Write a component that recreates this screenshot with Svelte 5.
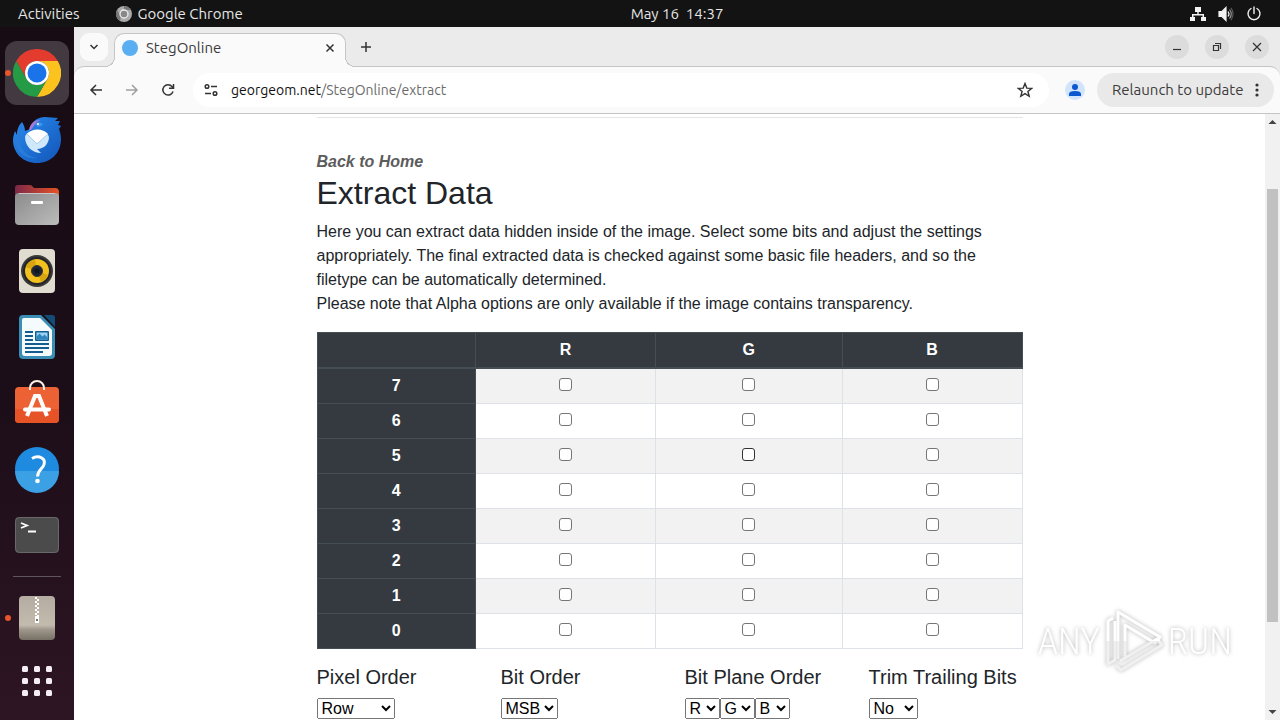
<script>
  const bits = [7, 6, 5, 4, 3, 2, 1, 0];
  const channels = ['R', 'G', 'B'];

  let selected = $state([]);
  let path = $state('/StegOnline/extract');
  let pixelOrder = $state('Row');
  let bitOrder = $state('MSB');
  let planes = $state(['R', 'G', 'B']);
  let trim = $state('No');
</script>

<div class="desktop">
  <header class="topbar">
    <div class="menus">
      <button>Activities</button>
      <button class="app">
        <svg width="16" height="16" viewBox="0 0 16 16">
          <circle cx="8" cy="8" r="8" fill="#aaa" />
          <path d="M8 0a8 8 0 0 1 7 4H8zM1 4l4 6-1 5a8 8 0 0 1-3-11z" fill="#777" />
          <circle cx="8" cy="8" r="4" fill="#888" stroke="#eee" stroke-width="1.3" />
        </svg>
        Google Chrome
      </button>
    </div>
    <button class="clock">May 16&nbsp; 14:37</button>
    <div class="status">
      <svg width="16" height="16" viewBox="0 0 16 16" fill="#f2f2f2">
        <path d="M5 1h6v5H8.700v2H14v3h2v4h-5v-4h1.500V9.400h-9V11H5v4H0v-4h2V8h5.300V6H5z" />
      </svg>
      <svg width="16" height="16" viewBox="0 0 16 16" fill="none" stroke="#f2f2f2" stroke-width="1.200">
        <path d="M1 5.500h3l4-4v13l-4-4H1z" fill="#f2f2f2" />
        <path d="M10 5.500q2 2.500 0 5" />
        <path d="M11.500 3.500q3.500 4.500 0 9" stroke="#999" />
        <path d="M13 1.800q4 6 0 12.400" stroke="#555" />
      </svg>
      <svg width="16" height="16" viewBox="0 0 16 16" fill="none" stroke="#f2f2f2" stroke-width="1.400">
        <path d="M5 2.500a6 6 0 1 0 6 0M8 1v6.500" stroke-linecap="round" />
      </svg>
    </div>
  </header>

  <nav class="dock">
    <button class="active running" aria-label="Google Chrome">
      <svg viewBox="0 0 48 48">
        <path d="M3.200 12A24 24 0 0 1 44.800 12H24A12 12 0 0 0 13.600 30z" fill="#e33b2e" />
        <path d="M44.800 12A24 24 0 0 1 24 48L34.400 30A12 12 0 0 0 24 12z" fill="#fcc31e" />
        <path d="M24 48A24 24 0 0 1 3.200 12L13.600 30A12 12 0 0 0 34.400 30z" fill="#259b46" />
        <circle cx="24" cy="24" r="12" fill="#fff" />
        <circle cx="24" cy="24" r="9.500" fill="#1a73e8" />
      </svg>
    </button>
    <button aria-label="Thunderbird">
      <svg viewBox="0 0 48 48">
        <defs>
          <linearGradient id="bird" x1="0" y1="0" x2="1" y2="1">
            <stop offset="0" stop-color="#2a8df0" />
            <stop offset="1" stop-color="#1254b8" />
          </linearGradient>
        </defs>
        <path d="M9 7c2 3 3 6 3 9l5-2C18 7 24 2 32 2c5 0 8 1 13 1l-3 3 5 0-2 4 3 1-2 3c1 3 2 6 2 10 0 14-10 24-24 24C10 48 0 38 0 25c0-3 1-6 2-9l2 4c0-6 2-10 5-13z" fill="url(#bird)" />
        <path d="M9 8c0 8-4 12-2 21 3 9 9 13 18 14C13 45 3 37 2 26l2-5c0-5 2-9 5-13z" fill="#2a7cda" />
        <path d="M16 15c1-6 5-10 11-10-5 3-6 6-9 10z" fill="#a679d8" />
        <path d="M12 22c2-9 22-9 24 0 0 7-5 12-12 12l4 4c-9 0-16-7-16-16z" fill="#cfe8fc" />
        <path d="M14 19c5-6 16-6 21 0l-10 9q-1 1-2 0z" fill="#fff" />
        <path d="m14 19 9 9q1 1 2 0l10-9" fill="none" stroke="#a8cbe7" />
        <path d="M22 9q4-3 8 0-2 3-5 3z" fill="#3f96ee" />
        <circle cx="25" cy="9" r="1" fill="#fff" />
      </svg>
    </button>
    <button aria-label="Files">
      <svg viewBox="0 0 48 48">
        <defs>
          <linearGradient id="tab"><stop offset="0" stop-color="#7d2849" /><stop offset="1" stop-color="#e65324" /></linearGradient>
          <linearGradient id="folder" x1="0" y1="0" x2="1" y2="1"><stop offset="0" stop-color="#8b8b8b" /><stop offset="1" stop-color="#bcbcbc" /></linearGradient>
        </defs>
        <path d="M2 15V7q0-3 3-3h12q2 0 3 2l1 1h21q4 0 4 4v8H2z" fill="url(#tab)" />
        <rect x="2" y="12" width="44" height="32" rx="4" fill="url(#folder)" />
        <path d="M6 12.500h36" stroke="#c7c7c7" />
        <rect x="18" y="20" width="12" height="3" rx="1" fill="#fff" />
      </svg>
    </button>
    <button aria-label="Rhythmbox">
      <svg viewBox="0 0 48 48">
        <rect x="6" y="2" width="36" height="44" rx="4" fill="#e0dccf" />
        <circle cx="24" cy="24" r="16" fill="#393938" />
        <circle cx="24" cy="24" r="14" fill="#24252a" />
        <circle cx="24" cy="24" r="12" fill="#f2c11e" />
        <path d="m24 24-11-4q3-7 9-7zM24 24l11 4q-2 5-7 7z" fill="#d8a511" />
        <circle cx="24" cy="24" r="5.500" fill="#1d2530" stroke="#383635" />
        <circle cx="24" cy="24" r="2.500" fill="#111722" />
      </svg>
    </button>
    <button aria-label="LibreOffice Writer">
      <svg viewBox="0 0 48 48">
        <path d="M10 2h18l14 14v26q0 4-4 4H10q-4 0-4-4V6q0-4 4-4z" fill="#3a8db5" />
        <path d="M11 5h16l12 12v23q0 3-3 3H12q-3 0-3-3V7q0-2 2-2z" fill="#f5fafc" />
        <path d="M31 2h8q3 0 3 3v9z" fill="#134d77" />
        <path d="M12 19h8M12 23h8M12 27h8M12 31h24M12 35h24M12 39h18" stroke="#135e91" stroke-width="2" />
        <rect x="22" y="18" width="14" height="10" rx="1" fill="#135e91" />
        <path d="M23.500 26.500V19.500h11v7z" fill="#9bd4f5" />
        <path d="M23.500 26.500v-3l3-3 3 3 2-2 3 3v2z" fill="#2f86bd" />
      </svg>
    </button>
    <button aria-label="Ubuntu Software">
      <svg viewBox="0 0 48 48">
        <rect x="2" y="8" width="44" height="36" rx="4" fill="#ed6235" />
        <path d="M2 30h44v10q0 4-4 4H6q-4 0-4-4z" fill="#e65326" />
        <path d="M17 11V9a7 7 0 0 1 14 0v2" fill="none" stroke="#fff1e5" stroke-width="2" />
        <path d="m14 37 8-20h4l8 20" fill="none" stroke="#fff" stroke-width="4" />
        <path d="M12 30.500h24" stroke="#fff" stroke-width="4" stroke-linecap="round" />
      </svg>
    </button>
    <button aria-label="Help">
      <svg viewBox="0 0 48 48">
        <circle cx="24" cy="24" r="22" fill="#1e8be0" />
        <path d="M2 26h44a22 22 0 0 1-44 0z" fill="#3ca0e5" />
        <path d="M19 13.500c7-4 14 0 12 6-1 4-6 5-6.500 12" fill="none" stroke="#fff" stroke-width="3" />
        <circle cx="24.500" cy="36" r="2.300" fill="#fff" />
      </svg>
    </button>
    <button aria-label="Terminal">
      <svg viewBox="0 0 48 48">
        <rect x="2" y="6" width="44" height="36" rx="4" fill="#4b4b4b" />
        <rect x="2.500" y="6.500" width="43" height="35" rx="4" fill="none" stroke="#696969" />
        <path d="m8 12 6 2.500L8 17M15 20.500h8" fill="none" stroke="#fff" stroke-width="1.800" />
      </svg>
    </button>
    <hr />
    <button class="running" aria-label="Archive Manager">
      <svg viewBox="0 0 48 48">
        <defs>
          <linearGradient id="archive" x2="0" y2="1">
            <stop offset="0" stop-color="#b4aca0" />
            <stop offset=".66" stop-color="#c4bbaf" />
            <stop offset=".76" stop-color="#a0988c" />
            <stop offset="1" stop-color="#777065" />
          </linearGradient>
        </defs>
        <rect x="6" y="2" width="36" height="44" rx="4" fill="url(#archive)" />
        <path d="M23 3v22" stroke="#fff" stroke-width="2" stroke-dasharray="2 2" />
        <path d="M25 5v20" stroke="#fff" stroke-width="2" stroke-dasharray="2 2" />
        <path d="M22 22h4v7h-4z" fill="#fff" />
        <path d="M23 25h2v2h-2z" fill="#777" />
      </svg>
    </button>
    <button class="apps" aria-label="Show Applications">
      <svg viewBox="0 0 48 48" fill="#f5edf5">
        {#each [9, 21, 33] as y}
          {#each [9, 21, 33] as x}
            <rect {x} {y} width="6" height="6" rx="1.5" />
          {/each}
        {/each}
      </svg>
    </button>
  </nav>

  <div class="browser">
    <div class="tabstrip">
      <button class="search-tabs" aria-label="Search tabs">
        <svg width="12" height="12" viewBox="0 0 12 12"><path d="m2.500 4 3.500 3.500L9.500 4" /></svg>
      </button>
      <div class="tab">
        <span class="favicon"></span>
        <span class="title">StegOnline</span>
        <button aria-label="Close tab">
          <svg width="12" height="12" viewBox="0 0 12 12"><path d="m2.500 2.500 7 7m0-7-7 7" /></svg>
        </button>
      </div>
      <button class="new-tab" aria-label="New tab">
        <svg width="12" height="12" viewBox="0 0 12 12"><path d="M6 1v10M1 6h10" /></svg>
      </button>
      <div class="window-buttons">
        <button aria-label="Minimize"><svg width="12" height="12" viewBox="0 0 12 12"><path d="M2 8.500h8" /></svg></button>
        <button aria-label="Restore"><svg width="12" height="12" viewBox="0 0 12 12"><path d="M2.500 4.500h5v5h-5zM4 2.500h5.500V8" /></svg></button>
        <button aria-label="Close"><svg width="12" height="12" viewBox="0 0 12 12"><path d="m2 2 8 8m0-8-8 8" /></svg></button>
      </div>
    </div>

    <div class="toolbar">
      <button class="nav" aria-label="Back">
        <svg width="16" height="16" viewBox="0 0 16 16"><path d="M14 8H3m5-5L3 8l5 5" /></svg>
      </button>
      <button class="nav" aria-label="Forward" disabled>
        <svg width="16" height="16" viewBox="0 0 16 16"><path d="M2 8h11M8 3l5 5-5 5" /></svg>
      </button>
      <button class="nav" aria-label="Reload">
        <svg width="16" height="16" viewBox="0 0 16 16"><path d="M13 9.500A5.200 5.200 0 1 1 12 4.500l1.500 1.500M13.500 2v4.300H9" /></svg>
      </button>
      <div class="omnibox">
        <svg width="16" height="16" viewBox="0 0 16 16">
          <path d="M8 4.500h6M2 11.500h6" />
          <circle cx="4" cy="4.500" r="1.800" />
          <circle cx="12" cy="11.500" r="1.800" />
        </svg>
        <label for="path">georgeom.net</label>
        <input id="path" type="text" bind:value={path} />
        <button aria-label="Bookmark this tab">
          <svg width="16" height="16" viewBox="0 0 16 16"><path d="m8 1.500 1.800 4.600 4.900.3-3.800 3.100 1.300 4.800L8 11.600l-4.200 2.700 1.300-4.800L1.300 6.400l4.900-.3z" /></svg>
        </button>
      </div>
      <button class="profile" aria-label="Profile">
        <svg width="20" height="20" viewBox="0 0 20 20">
          <circle cx="10" cy="10" r="10" fill="#d2e3fc" />
          <circle cx="10" cy="7" r="3" fill="#0b57d0" />
          <path d="M4 16v-2q0-3 6-3t6 3v2z" fill="#0b57d0" />
        </svg>
      </button>
      <button class="relaunch">
        Relaunch to update
        <svg width="4" height="16" viewBox="0 0 4 16" fill="#333">
          <circle cx="2" cy="3" r="1.600" /><circle cx="2" cy="8" r="1.600" /><circle cx="2" cy="13" r="1.600" />
        </svg>
      </button>
    </div>

    <div class="viewport">
      <main>
        <div class="content">
          <hr />
          <a href="/StegOnline">Back to Home</a>
          <h2>Extract Data</h2>
          <p>
            Here you can extract data hidden inside of the image. Select some bits and adjust the settings
            appropriately. The final extracted data is checked against some basic file headers, and so the
            filetype can be automatically determined.<br />
            Please note that Alpha options are only available if the image contains transparency.
          </p>

          <table>
            <colgroup>
              <col class="bit" /><col class="red" /><col class="green" /><col class="blue" />
            </colgroup>
            <thead>
              <tr>
                <th></th>
                {#each channels as channel}
                  <th scope="col">{channel}</th>
                {/each}
              </tr>
            </thead>
            <tbody>
              {#each bits as bit}
                <tr>
                  <th scope="row">{bit}</th>
                  {#each channels as channel}
                    <td>
                      <input
                        type="checkbox"
                        class:hovered={bit === 5 && channel === 'G'}
                        value={channel + bit}
                        aria-label={channel + bit}
                        bind:group={selected}
                      />
                    </td>
                  {/each}
                </tr>
              {/each}
            </tbody>
          </table>

          <div class="options">
            <div>
              <label for="pixel-order">Pixel Order</label>
              <select id="pixel-order" bind:value={pixelOrder}>
                <option>Row</option>
                <option>Column</option>
              </select>
            </div>
            <div>
              <label for="bit-order">Bit Order</label>
              <select id="bit-order" bind:value={bitOrder}>
                <option>MSB</option>
                <option>LSB</option>
              </select>
            </div>
            <div>
              <label for="plane-0">Bit Plane Order</label>
              <div class="planes">
                {#each planes as _, i}
                  <select id="plane-{i}" aria-label="Plane {i + 1}" bind:value={planes[i]}>
                    {#each channels as channel}
                      <option>{channel}</option>
                    {/each}
                  </select>
                {/each}
              </div>
            </div>
            <div>
              <label for="trim">Trim Trailing Bits</label>
              <select id="trim" bind:value={trim}>
                <option>No</option>
                <option>Yes</option>
              </select>
            </div>
          </div>
        </div>
      </main>
      <div class="scrollbar">
        <svg width="15" height="17" viewBox="0 0 15 17"><path d="m3.500 10 4-4 4 4z" /></svg>
        <div class="before"></div>
        <div class="thumb"></div>
        <div class="after"></div>
        <svg width="15" height="17" viewBox="0 0 15 17"><path d="m3.500 7 4 4 4-4z" /></svg>
      </div>
    </div>
  </div>

  <div class="watermark">
    <span>ANY</span>
    <svg width="60" height="64" viewBox="0 0 60 64" fill="none" stroke="url(#mark)" stroke-width="3" stroke-linejoin="round">
      <defs>
        <linearGradient id="mark" gradientUnits="userSpaceOnUse" x1="0" y1="0" x2="0" y2="64">
          <stop offset=".5" stop-color="#fff" />
          <stop offset=".5" stop-color="#f0f0f0" />
        </linearGradient>
      </defs>
      <path d="M9 9 4 12v43l7-4V12" />
      <path d="M14 50V3l42 25-5 6-30-18v32" />
      <path d="m12 56 5 5 41-25-5-6-37 22" />
    </svg>
    <span>RUN</span>
  </div>
</div>

<style>
  :global(body) {
    margin: 0;
  }

  .desktop {
    position: relative;
    display: grid;
    grid-template: 27px minmax(0, 1fr) / 74px minmax(0, 1fr);
    height: 100vh;
    overflow: hidden;
    font-family: Ubuntu, 'Noto Sans', sans-serif;
    font-size: 15px;
    line-height: 20px;
  }

  button {
    display: flex;
    align-items: center;
    justify-content: center;
    padding: 0;
    border: 0;
    background: none;
    color: inherit;
    font: inherit;
  }

  /* Top panel */
  .topbar {
    grid-column: 1 / -1;
    display: grid;
    grid-template-columns: 1fr auto 1fr;
    align-items: center;
    padding: 0 18px;
    background: #131313;
    color: #e6e6e6;
  }

  .menus {
    display: flex;
    gap: 36px;
  }

  .app {
    gap: 6px;
  }

  .clock {
    padding-left: 74px;
  }

  .status {
    display: flex;
    justify-content: flex-end;
    gap: 12px;
  }

  /* Dock */
  .dock {
    display: flex;
    flex-direction: column;
    align-items: center;
    gap: 2px;
    padding-top: 14px;
    background: linear-gradient(#170b14, #1c0e18 55%, #2e1524);
  }

  .dock button {
    position: relative;
    flex: none;
    width: 64px;
    height: 64px;
    border-radius: 12px;
  }

  .dock button.active {
    background: #433a41;
  }

  .dock .running::before {
    content: '';
    position: absolute;
    left: 0;
    width: 6px;
    height: 6px;
    border-radius: 50%;
    background: #e9542a;
  }

  .dock button.apps {
    height: 58px;
  }

  .dock svg {
    width: 48px;
    height: 48px;
  }

  .dock hr {
    width: 48px;
    height: 1px;
    margin: 7px 0;
    border: 0;
    background: #5e545b;
  }

  /* Browser window */
  .browser {
    display: flex;
    flex-direction: column;
    min-height: 0;
    background: #ebebeb;
    color: #3c3c3c;
  }

  .browser button svg,
  .omnibox svg {
    fill: none;
    stroke: #333;
    stroke-width: 1.5px;
  }

  .tabstrip {
    display: flex;
    align-items: flex-start;
    height: 33px;
    padding: 6px 11px 0 6px;
  }

  .search-tabs {
    width: 28px;
    height: 28px;
    border-radius: 9px;
    background: #fafafa;
  }

  .tab {
    position: relative;
    z-index: 1;
    display: flex;
    align-items: center;
    gap: 8px;
    box-sizing: border-box;
    width: 232px;
    height: 34px;
    margin-left: 6px;
    padding: 0 9px 6px 7px;
    border: 1px solid #c5c5c5;
    border-bottom: 0;
    border-radius: 10px 10px 0 0;
    background: #fafafa;
  }

  /* Flared feet that join the tab to the toolbar */
  .tab::before,
  .tab::after {
    content: '';
    position: absolute;
    bottom: 0;
    width: 10px;
    height: 10px;
  }

  .tab::before {
    right: 100%;
    background: radial-gradient(circle at 0 0, #ebebeb 9px, #c5c5c5 9px 10px, #fafafa 10px);
  }

  .tab::after {
    left: 100%;
    background: radial-gradient(circle at 100% 0, #ebebeb 9px, #c5c5c5 9px 10px, #fafafa 10px);
  }

  .favicon {
    width: 16px;
    height: 16px;
    border-radius: 50%;
    background: #5aaef2;
  }

  .title {
    flex: 1;
  }

  .new-tab {
    height: 28px;
    margin-left: 14px;
  }

  .window-buttons {
    display: flex;
    gap: 16px;
    margin: 2px 0 0 auto;
  }

  .window-buttons button {
    width: 24px;
    height: 24px;
    border-radius: 50%;
    background: #dcdcdc;
  }

  .window-buttons button svg {
    stroke-width: 1.2px;
  }

  .toolbar {
    display: flex;
    align-items: center;
    height: 46px;
    padding: 0 6px 0 14px;
    border: solid #c5c5c5;
    border-width: 1px 0;
    border-radius: 10px 10px 0 0;
    background: #fafafa;
  }

  .nav {
    width: 16px;
    margin-right: 20px;
  }

  .nav:disabled {
    opacity: 0.45;
  }

  .nav:nth-child(3) {
    margin-right: 17px;
  }

  .omnibox {
    flex: 1;
    display: flex;
    align-items: center;
    height: 34px;
    padding: 0 16px 0 10px;
    border-radius: 17px;
    background: #fff;
    font-size: 14px;
  }

  .omnibox label {
    margin-left: 12px;
    color: #111;
  }

  .omnibox input {
    flex: 1;
    min-width: 0;
    padding: 0;
    border: 0;
    outline: 0;
    background: none;
    color: #6b6b6b;
    font: inherit;
  }

  .omnibox button svg {
    stroke-width: 1.4px;
  }

  .profile {
    margin: 0 12px 0 16px;
  }

  .browser .profile svg,
  .browser .relaunch svg {
    stroke: none;
    fill: #333;
  }

  .relaunch {
    justify-content: space-between;
    box-sizing: border-box;
    width: 177px;
    height: 34px;
    padding: 0 15px;
    border-radius: 17px;
    background: #e9e9e9;
    white-space: nowrap;
  }

  /* Page */
  .viewport {
    flex: 1;
    display: flex;
    min-height: 0;
  }

  main {
    flex: 1;
    overflow: hidden;
    background: #fff;
    color: #212529;
    font: 16px/24px 'Liberation Sans', Arial, sans-serif;
  }

  .content {
    max-width: 706px;
    margin: 0 auto;
    padding-top: 3px;
  }

  .content hr {
    height: 1px;
    margin: 0 0 32px;
    border: 0;
    background: #e5e5e5;
  }

  a {
    display: block;
    color: #5c5c5c;
    font-weight: bold;
    font-style: italic;
    text-decoration: none;
  }

  h2 {
    margin: 0 0 8px;
    font-size: 32px;
    font-weight: 500;
    line-height: 38px;
  }

  p {
    margin: 0 0 16px;
  }

  table {
    width: 100%;
    margin-bottom: 16px;
    border: 1px solid #dee2e6;
    border-collapse: collapse;
    table-layout: fixed;
    text-align: center;
  }

  .bit {
    width: 22.5%;
  }

  .red {
    width: 25.5%;
  }

  .green {
    width: 26.5%;
  }

  .blue {
    width: 25.5%;
  }

  th,
  td {
    padding: 5px;
    border: 1px solid #dee2e6;
  }

  th {
    border-color: #454d55;
    background: #343a40;
    color: #fff;
  }

  thead th {
    border-bottom-width: 2px;
  }

  tbody tr:nth-child(odd) {
    background: #f2f2f2;
  }

  td {
    padding: 0 5px 4px;
  }

  input[type='checkbox'] {
    appearance: none;
    box-sizing: border-box;
    width: 13px;
    height: 13px;
    margin: 0;
    border: 1px solid #767676;
    border-radius: 3px;
    background: #fff;
    vertical-align: middle;
  }

  input[type='checkbox'].hovered {
    border-color: #333;
  }

  input[type='checkbox']:checked {
    border-color: #0075ff;
    background: #0075ff;
  }

  .options {
    display: grid;
    grid-template-columns: repeat(4, minmax(0, 1fr));
    gap: 30px;
  }

  .options label {
    display: block;
    margin-bottom: 9px;
    font-size: 20px;
    white-space: nowrap;
  }

  .planes {
    display: flex;
  }

  select {
    display: block;
    margin: 0;
    font: 16px 'Liberation Sans', Arial, sans-serif;
  }

  .scrollbar {
    display: flex;
    flex-direction: column;
    width: 15px;
    background: #f1f1f1;
  }

  .scrollbar svg {
    flex: none;
    fill: #444;
  }

  .before {
    flex: 58;
  }

  .thumb {
    flex: 433;
    margin: 0 2px;
    background: #c1c1c1;
  }

  .after {
    flex: 81;
  }

  /* Recorder watermark */
  .watermark {
    position: absolute;
    right: 48px;
    bottom: 47px;
    z-index: 2;
    display: flex;
    align-items: center;
    gap: 4px;
    color: #fff;
    font: 300 37px 'Roboto Condensed', 'Open Sans Condensed', Roboto, sans-serif;
    filter: drop-shadow(0 0 2px rgba(0, 0, 0, 0.3));
    pointer-events: none;
  }
</style>
